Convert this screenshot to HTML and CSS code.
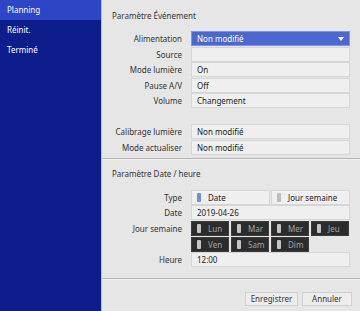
FILE: index.html
```html
<!DOCTYPE html>
<html lang="fr">
<head>
<meta charset="utf-8">
<link rel="stylesheet" href="styles.css">
</head>
<body>
<div class="app">
  <nav class="sidebar">
    <div class="nav-item active">Planning</div>
    <div class="nav-item">Réinit.</div>
    <div class="nav-item">Terminé</div>
  </nav>
  <main class="content">
    <section class="section sec-event">
      <div class="sec-title">Paramètre Événement</div>
      <div class="rows">
        <div class="row"><div class="label">Alimentation</div><div class="box select">Non modifié<span class="caret"></span></div></div>
        <div class="row"><div class="label">Source</div><div class="box"></div></div>
        <div class="row"><div class="label">Mode lumière</div><div class="box">On</div></div>
        <div class="row"><div class="label">Pause A/V</div><div class="box">Off</div></div>
        <div class="row"><div class="label">Volume</div><div class="box">Changement</div></div>
      </div>
      <div class="rows rows-2">
        <div class="row"><div class="label">Calibrage lumière</div><div class="box">Non modifié</div></div>
        <div class="row"><div class="label">Mode actualiser</div><div class="box">Non modifié</div></div>
      </div>
    </section>
    <section class="section sec-date">
      <div class="sec-title">Paramètre Date / heure</div>
      <div class="rows">
        <div class="row"><div class="label">Type</div>
          <div class="pair">
            <div class="box opt"><span class="ind on"></span>Date</div>
            <div class="box opt"><span class="ind"></span>Jour semaine</div>
          </div>
        </div>
        <div class="row"><div class="label">Date</div><div class="box">2019-04-26</div></div>
        <div class="row row-days"><div class="label">Jour semaine</div>
          <div class="days">
            <div class="day"><span class="ind"></span>Lun</div>
            <div class="day"><span class="ind"></span>Mar</div>
            <div class="day"><span class="ind"></span>Mer</div>
            <div class="day"><span class="ind"></span>Jeu</div>
            <div class="day"><span class="ind"></span>Ven</div>
            <div class="day"><span class="ind"></span>Sam</div>
            <div class="day"><span class="ind"></span>Dim</div>
          </div>
        </div>
        <div class="row"><div class="label">Heure</div><div class="box">12:00</div></div>
      </div>
    </section>
    <footer class="footer">
      <button class="btn btn-save">Enregistrer</button>
      <button class="btn btn-cancel">Annuler</button>
    </footer>
  </main>
</div>
</body>
</html>
```

FILE: styles.css
```css
* { box-sizing: border-box; }
html, body { margin: 0; padding: 0; }
body {
  width: 360px;
  height: 311px;
  overflow: hidden;
  font-family: "Noto Sans", "Open Sans", sans-serif;
  font-size: 8px;
  color: #333;
  background: #e6e6e6;
}
.app { display: flex; height: 311px; }
.sidebar {
  width: 102px;
  flex: none;
  background: #0e1d8c;
  border-right: 1px solid #b9bdd6;
}
.nav-item {
  height: 20px;
  line-height: 20px;
  padding-left: 7px;
  color: #fff;
  font-size: 8px;
}
.nav-item.active { background: #2d46c6; }
.content {
  flex: 1;
  display: flex;
  flex-direction: column;
  background: #e6e6e6;
}
.section { padding: 10px 10px 0 0; }
.sec-title {
  padding-left: 10px;
  height: 12px;
  line-height: 12px;
  color: #333;
}
.sec-event { padding-bottom: 3px; border-bottom: 1px solid #b4b4b4; box-shadow: 0 1px 0 #f2f2f2; }
.sec-event .rows { margin-top: 9px; }
.sec-event .rows-2 { margin-top: 16px; }
.sec-date { padding-top: 9px; padding-bottom: 11px; border-bottom: 1px solid #b4b4b4; box-shadow: 0 1px 0 #f2f2f2; }
.sec-date .rows { margin-top: 10px; }
.rows { display: flex; flex-direction: column; gap: 0.5px; }
.row { display: flex; align-items: flex-start; }
.label {
  width: 80px;
  flex: none;
  text-align: right;
  height: 15px;
  line-height: 15px;
  color: #333;
}
.box {
  margin-left: 9px;
  width: 159px;
  height: 15px;
  line-height: 13px;
  padding-left: 5px;
  background: #efefef;
  border: 1px solid #d6d6d6;
  color: #222;
  white-space: nowrap;
}
.box.select {
  position: relative;
  background: #4a68cf;
  border-color: #7d95e0;
  color: #fff;
}
.caret {
  position: absolute;
  right: 5px;
  top: 5px;
  width: 0; height: 0;
  border-left: 3.5px solid transparent;
  border-right: 3.5px solid transparent;
  border-top: 4px solid #fff;
}
.pair { margin-left: 9px; display: flex; gap: 1px; width: 159px; }
.pair .box { margin-left: 0; width: 79px; flex: none; }
.opt { display: flex; align-items: center; }
.ind {
  display: inline-block;
  width: 4px;
  height: 9px;
  border-radius: 1px;
  background: #bdbdbd;
  margin-right: 7px;
  flex: none;
}
.ind.on { background: #6f8cf3; }
.row-days .label { height: 15px; }
.days {
  margin-left: 9px;
  width: 160px;
  display: grid;
  grid-template-columns: repeat(4, 38px);
  column-gap: 2px;
  row-gap: 1px;
}
.day {
  height: 15px;
  background: #2c2c2c;
  border: 1px solid #3c3c3c;
  color: #a3a3a3;
  display: flex;
  align-items: center;
  padding-left: 5px;
}
.day .ind { background: #c4c4c4; }
.footer {
  flex: 1;
  display: flex;
  justify-content: flex-end;
  align-items: flex-start;
  gap: 4px;
  padding: 13px 9px 0 0;
}
.btn {
  font-family: "Noto Sans", "Open Sans", sans-serif;
  font-size: 8px;
  color: #333;
  background: #ededed;
  border: 1px solid #d0d0d0;
  height: 14px;
  line-height: 12px;
  padding: 0;
  margin: 0;
}
.btn-save { width: 53px; }
.btn-cancel { width: 50px; }
```
